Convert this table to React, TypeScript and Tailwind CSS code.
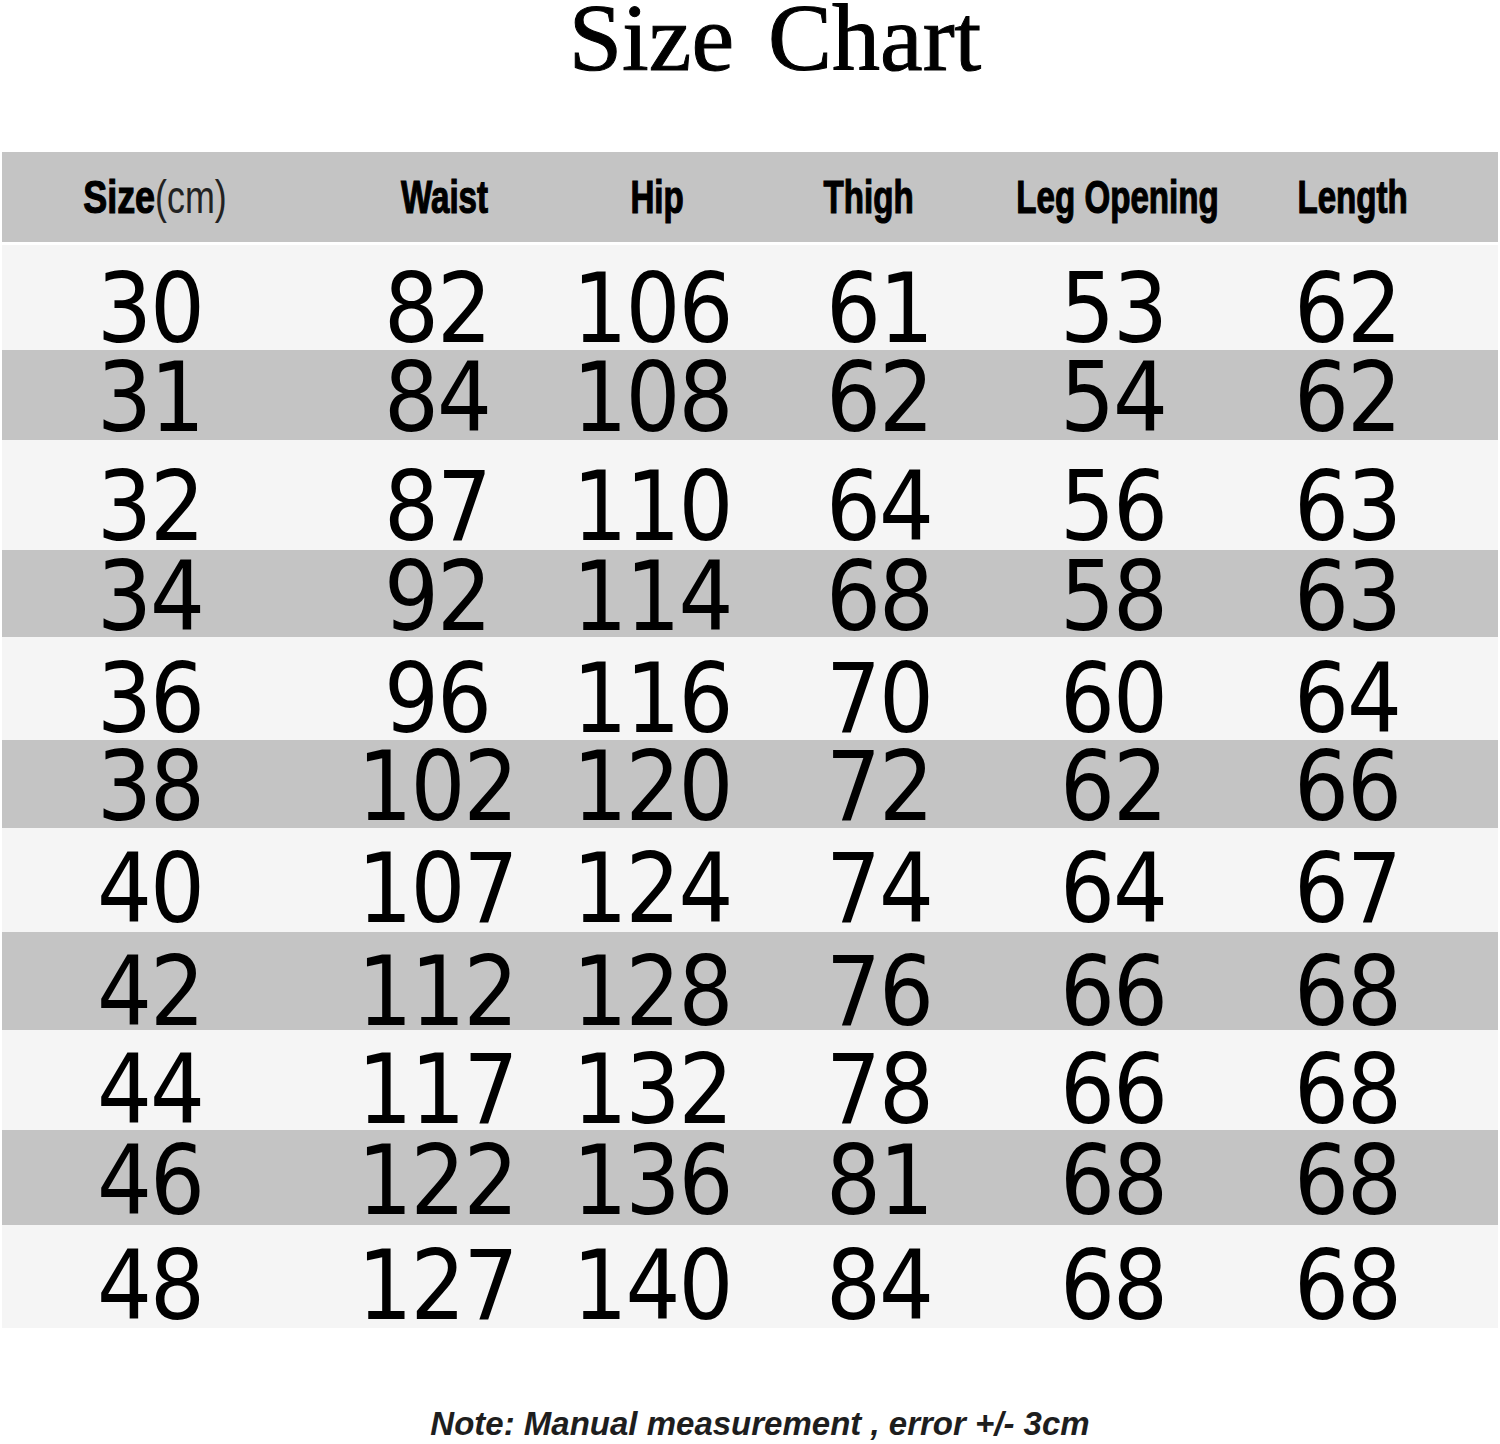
const columns = ["Waist", "Hip", "Thigh", "Leg Opening", "Length"];

const rows = [
  { bg: "bg-[#f5f5f5]", h: "h-[105px]", pad: "pt-[22px]", v: ["30", "82", "106", "61", "53", "62"] },
  { bg: "bg-[#c4c4c4]", h: "h-[90px]", pad: "pt-[6px]", v: ["31", "84", "108", "62", "54", "62"] },
  { bg: "bg-[#f5f5f5]", h: "h-[110px]", pad: "pt-[24px]", v: ["32", "87", "110", "64", "56", "63"] },
  { bg: "bg-[#c4c4c4]", h: "h-[87px]", pad: "pt-[6px]", v: ["34", "92", "114", "68", "58", "63"] },
  { bg: "bg-[#f5f5f5]", h: "h-[103px]", pad: "pt-[20px]", v: ["36", "96", "116", "70", "60", "64"] },
  { bg: "bg-[#c4c4c4]", h: "h-[88px]", pad: "pt-[6px]", v: ["38", "102", "120", "72", "62", "66"] },
  { bg: "bg-[#f5f5f5]", h: "h-[104px]", pad: "pt-[18px]", v: ["40", "107", "124", "74", "64", "67"] },
  { bg: "bg-[#c4c4c4]", h: "h-[98px]", pad: "pt-[22px]", v: ["42", "112", "128", "76", "66", "68"] },
  { bg: "bg-[#f5f5f5]", h: "h-[100px]", pad: "pt-[20px]", v: ["44", "117", "132", "78", "66", "68"] },
  { bg: "bg-[#c4c4c4]", h: "h-[95px]", pad: "pt-[6px]", v: ["46", "122", "136", "81", "68", "68"] },
  { bg: "bg-[#f5f5f5]", h: "h-[103px]", pad: "pt-[18px]", v: ["48", "127", "140", "84", "68", "68"] },
];

// body columns and header columns are centred a little differently in the chart
const bodyGrid = "grid grid-cols-[296px_278px_152px_302px_166px_302px]";
const headGrid = "grid grid-cols-[306px_272px_154px_270px_228px_242px]";

function HeadLabel({ children }: { children: React.ReactNode }) {
  return (
    <span className="inline-block origin-center scale-x-[0.72] whitespace-nowrap font-['Liberation_Sans',Arial,sans-serif] text-[46px] font-bold leading-none text-black [-webkit-text-stroke:1.2px_black]">
      {children}
    </span>
  );
}

export default function App() {
  return (
    <div className="h-[1444px] w-[1500px] overflow-hidden bg-white">
      <div className="flow-root h-[152px] pl-[50px] text-center">
        <h1 className="-mt-[10px] font-['Liberation_Serif','Times_New_Roman',serif] text-[96px] leading-none text-black [word-spacing:10px] [-webkit-text-stroke:1px_black]">
          Size Chart
        </h1>
      </div>

      <div className="ml-[2px] w-[1496px]">
        <div className={`${headGrid} h-[90px] items-center bg-[#c4c4c4]`}>
          <div className="flex justify-center">
            <span className="inline-flex origin-center scale-x-[0.78] items-baseline whitespace-nowrap">
              <span className="font-['Liberation_Sans',Arial,sans-serif] text-[46px] font-bold leading-none text-black [-webkit-text-stroke:1.2px_black]">
                Size
              </span>
              <span className="font-['Liberation_Sans',Arial,sans-serif] text-[46px] font-normal leading-none text-[#222]">
                (cm)
              </span>
            </span>
          </div>
          {columns.map((c) => (
            <div key={c} className="flex justify-center">
              <HeadLabel>{c}</HeadLabel>
            </div>
          ))}
        </div>

        <div className="mt-[3px]">
          {rows.map((r) => (
            <div key={r.v[0]} className={`${bodyGrid} ${r.h} ${r.bg} items-center`}>
              {r.v.map((n, i) => (
                <div key={i} className={`flex justify-center ${r.pad}`}>
                  <span className="whitespace-nowrap font-['DejaVu_Sans_Condensed','DejaVu_Sans',sans-serif] text-[96px] leading-[72px] tracking-[-2px] text-black">
                    {n}
                  </span>
                </div>
              ))}
            </div>
          ))}
        </div>
      </div>

      <div className="pl-[20px] pt-[79px] text-center">
        <p className="font-['Liberation_Sans',Arial,sans-serif] text-[33px] font-bold italic leading-none text-[#1e1e1e]">
          Note: Manual measurement , error +/- 3cm
        </p>
      </div>
    </div>
  );
}
